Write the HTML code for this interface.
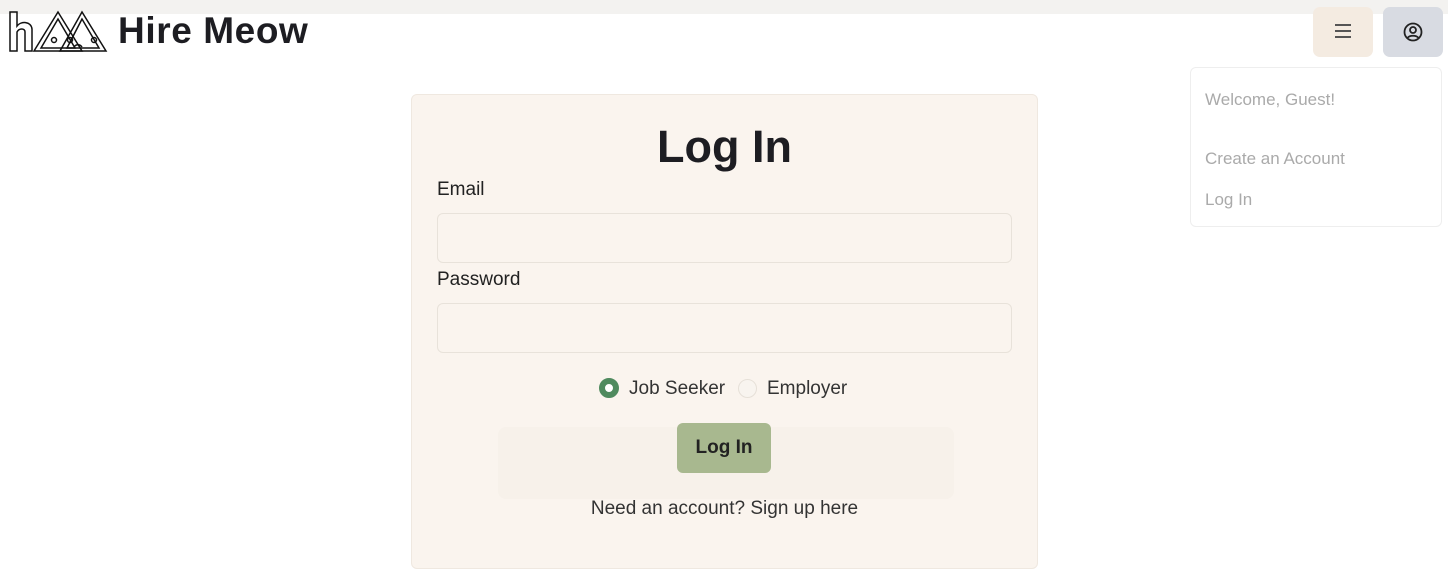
<!DOCTYPE html>
<html><head><style>
*{margin:0;padding:0;box-sizing:border-box}
body{width:1448px;height:586px;background:#fff;font-family:"Liberation Sans",sans-serif;position:relative;overflow:hidden;color:#222}
.top{position:absolute;left:0;top:0;width:1448px;height:14px;background:#f3f2f0}
.brand{position:absolute;left:118px;top:10px;font-size:37px;font-weight:bold;color:#1d1d22;letter-spacing:0.6px}
.btn1{position:absolute;left:1313px;top:7px;width:60px;height:50px;background:#f4ebe1;border-radius:7px}
.btn2{position:absolute;left:1383px;top:7px;width:60px;height:50px;background:#d8dbe2;border-radius:7px}
.menu{position:absolute;left:1190px;top:67px;width:252px;height:160px;border:1px solid #eee;border-radius:6px;background:#fff;color:#aaa;font-size:17px}
.menu div{position:absolute;left:14px}
.card{position:absolute;left:411px;top:94px;width:627px;height:475px;background:#faf4ee;border:1px solid #efe8e0;border-radius:6px}
h1{position:absolute;left:0;width:100%;top:26px;text-align:center;font-size:45px;color:#1d1d22}
.lbl{position:absolute;left:25px;font-size:19px;color:#222}
.inp{position:absolute;left:25px;width:575px;height:50px;border:1px solid #e8e2da;border-radius:6px;background:#faf4ee}
.ghost{position:absolute;left:86px;top:332px;width:456px;height:72px;background:#f7f1ea;border-radius:8px}
.lb{position:absolute;left:265px;top:328px;width:94px;height:50px;background:#a8b88f;border-radius:6px;font-size:19px;font-weight:bold;text-align:center;line-height:50px;color:#222}
</style></head><body>
<div class="top"></div>
<svg style="position:absolute;left:6px;top:8px" width="102" height="46" viewBox="0 0 102 46" fill="none" stroke="#111" stroke-width="1.5">
<path d="M4 4h7v14c4-5 14-5 15 3v22h-7V24c0-4-6-4-8 0v19H4z"/>
<path d="M52 4L28 43h48zM52 11L35 40h34z"/><path d="M76 4L54 43h46zM76 11L61 40h32z"/>
<circle cx="48" cy="32" r="2.5"/><circle cx="64" cy="32" r="2.5"/><circle cx="88" cy="32" r="2.5"/><path d="M68 39c2-3 6-3 8 0"/>
</svg>
<div class="brand">Hire Meow</div>
<div class="btn1"><svg style="position:absolute;left:21px;top:16px" width="18" height="16"><path d="M1 2h16M1 8h16M1 14h16" stroke="#555" stroke-width="2"/></svg></div>
<div class="btn2"><svg style="position:absolute;left:20px;top:15px" width="20" height="20" fill="none" stroke="#222" stroke-width="1.8"><circle cx="10" cy="10" r="8.5"/><circle cx="10" cy="8" r="3"/><path d="M4.5 16c2-3 9-3 11 0"/></svg></div>
<div class="menu"><div style="top:22px">Welcome, Guest!</div><div style="top:81px">Create an Account</div><div style="top:122px">Log In</div></div>
<div class="card">
<h1>Log In</h1>
<div class="lbl" style="top:84px">Email</div>
<div class="inp" style="top:118px"></div>
<div class="lbl" style="top:174px">Password</div>
<div class="inp" style="top:208px"></div>
<div style="position:absolute;left:187px;top:283px;width:20px;height:20px;border-radius:50%;border:6px solid #4f8a5e;background:#fff"></div>
<div style="position:absolute;left:217px;top:283px;font-size:19px;color:#333">Job Seeker</div>
<div style="position:absolute;left:326px;top:284px;width:19px;height:19px;border-radius:50%;border:1px solid #e6e0d8;background:#f8f4ef"></div>
<div style="position:absolute;left:355px;top:283px;font-size:19px;color:#333">Employer</div>
<div class="ghost"></div>
<div class="lb">Log In</div>
<div style="position:absolute;left:0;width:100%;top:403px;text-align:center;font-size:19px;color:#333">Need an account? Sign up here</div>
</div>
</body></html>
